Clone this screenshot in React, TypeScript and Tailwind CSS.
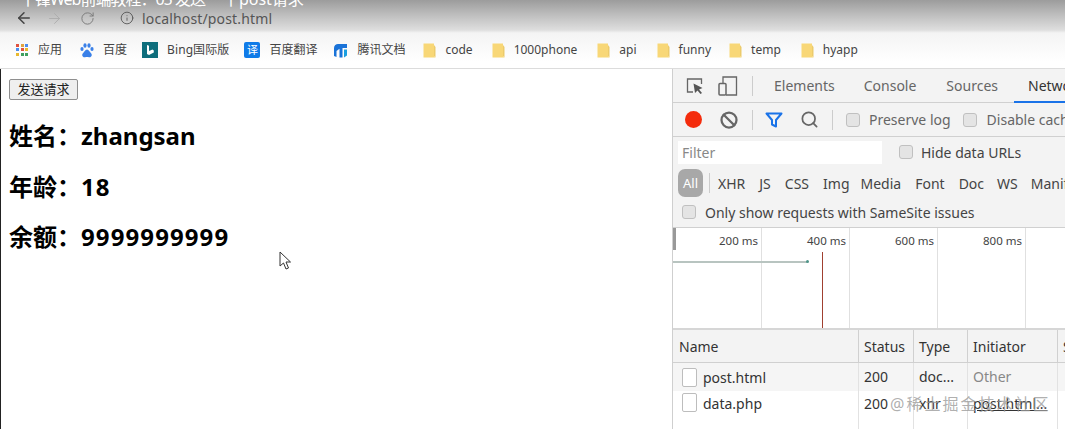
import React from 'react';
import { ArrowLeft, ArrowRight, RotateCw, Info, Search, Ban } from 'lucide-react';

const SANS = "font-['Noto_Sans','Noto_Sans_CJK_SC',sans-serif]";

function Folder() {
  return (
    <svg width="13" height="15" viewBox="0 0 13 15" className="shrink-0">
      <path d="M0.5 0.5H11V12.5L12.5 14.5H0.5Z" fill="#f8d777" />
      <path d="M11 2V12.5L12.5 14.5V4Z" fill="#eccb6c" />
    </svg>
  );
}

function AppsIcon() {
  const colors = ['#e0523f', '#e0a33f', '#4b8df0', '#4b8df0', '#e0523f', '#e8b92f', '#e8b92f', '#3f9f5f', '#3f9f5f'];
  return (
    <div className="grid grid-cols-3 gap-px w-[13px] h-[13px] shrink-0">
      {colors.map((c, i) => (
        <div key={i} className="w-[3px] h-[3px]" style={{ backgroundColor: c }} />
      ))}
    </div>
  );
}

function BaiduIcon() {
  return (
    <svg width="14" height="15" viewBox="0 0 14 15" fill="#3a80e8" className="shrink-0">
      <ellipse cx="2" cy="6" rx="1.6" ry="2" />
      <ellipse cx="5" cy="2.5" rx="1.6" ry="2.2" />
      <ellipse cx="9" cy="2.5" rx="1.6" ry="2.2" />
      <ellipse cx="12" cy="6" rx="1.6" ry="2" />
      <path d="M7 6.5C5 6.5 4.5 9 3 10.2C1.5 11.5 2.2 14.5 5 14.2C6.5 14 7.5 14 9 14.2C11.8 14.5 12.5 11.5 11 10.2C9.5 9 9 6.5 7 6.5Z" />
    </svg>
  );
}

function BingIcon() {
  return (
    <svg width="16" height="16" viewBox="0 0 16 16" className="shrink-0">
      <rect width="16" height="16" fill="#0e6e7c" />
      <path d="M5 3L7 3.7V9L10.5 7.5L11.8 8.4V10.5L7 13L5 12Z" fill="#fff" />
    </svg>
  );
}

function TencentIcon() {
  return (
    <svg width="15" height="15" viewBox="0 0 15 15" className="shrink-0">
      <path d="M1 5C1 2.5 3 1 5 1H14V5H9.5V14.5H6.5V5.8L3.5 8V14L1 13Z" fill="#1a73d8" />
      <path d="M11 6.5H14V12.5L11 14.5Z" fill="#1a9fe0" />
    </svg>
  );
}

function Bookmark({ icon, label, className }: { icon: React.ReactNode; label: string; className: string }) {
  return (
    <div className={`flex items-center gap-[9px] ${className}`}>
      {icon}
      <span className="text-[12px] text-[#444] whitespace-nowrap">{label}</span>
    </div>
  );
}

function Checkbox() {
  return <div className="w-[14px] h-[14px] rounded-[3px] bg-[#e4e4e4] border border-[#c0c0c0] shrink-0" />;
}

function DocIcon() {
  return <div className="w-[15px] h-[19px] bg-white border border-[#bdbdbd] rounded-[2px] shrink-0" />;
}

function BrowserBar() {
  return (
    <div className="h-[69px] shrink-0 border-b border-[#dcdcdc] bg-[linear-gradient(to_bottom,#9c9c9c_0px,#bcbcbc_14px,#dedede_30px,#f4f4f4_33px,#ffffff_62px)] overflow-hidden">
      <div className="h-[32px] relative">
        <div className="absolute left-[20px] -top-[13px] text-[16px] text-white whitespace-nowrap">
          <span className="tracking-[-1px]">丨锋Web前端教程：05 发送</span>
          <span className="ml-[18px]">丨post请求</span>
        </div>
        <div className="flex items-center h-[36px] pl-[15px] text-[#555]">
          <ArrowLeft size={18} strokeWidth={2} className="text-[#444]" />
          <ArrowRight size={17} strokeWidth={1.2} className="ml-[13px] text-[#aaa]" />
          <RotateCw size={15} strokeWidth={1.5} className="ml-[17px] text-[#777]" />
          <Info size={14} strokeWidth={1.5} className="ml-[25px] text-[#555]" />
          <span className="ml-[8px] text-[14px] tracking-[0.15px] text-[#555]">localhost/post.html</span>
        </div>
      </div>
      <div className="flex items-center h-[36px] pl-[16px]">
        <Bookmark className="mr-[18px]" icon={<AppsIcon />} label="应用" />
        <Bookmark className="mr-[15px]" icon={<BaiduIcon />} label="百度" />
        <Bookmark className="mr-[15px] tracking-[0.1px]" icon={<BingIcon />} label="Bing国际版" />
        <Bookmark className="mr-[16px]" icon={<div className="w-[16px] h-[16px] rounded-[2px] bg-[#0f7be8] text-white text-[11px] leading-[16px] text-center shrink-0">译</div>} label="百度翻译" />
        <Bookmark className="mr-[18px]" icon={<TencentIcon />} label="腾讯文档" />
        <Bookmark className="mr-[19px]" icon={<Folder />} label="code" />
        <Bookmark className="mr-[20px]" icon={<Folder />} label="1000phone" />
        <Bookmark className="mr-[20px]" icon={<Folder />} label="api" />
        <Bookmark className="mr-[18px]" icon={<Folder />} label="funny" />
        <Bookmark className="mr-[20px]" icon={<Folder />} label="temp" />
        <Bookmark className="" icon={<Folder />} label="hyapp" />
      </div>
    </div>
  );
}

function PageContent() {
  return (
    <div className="relative w-[672px] shrink-0 bg-white border-l border-[#222] pl-[8px] pt-[10px] text-black">
      <button className="block h-[21px] w-[69px] bg-[#efefef] border border-[#8f8f8f] rounded-[2px] text-[13px] leading-none text-[#222]">
        发送请求
      </button>
      <div className="mt-[21px] flex flex-col gap-[20.5px] text-[24px] font-bold leading-[30px]">
        <div>姓名：zhangsan</div>
        <div>年龄：<span className="tracking-[1.1px]">18</span></div>
        <div>余额：<span className="tracking-[1.1px]">9999999999</span></div>
      </div>
      {/* cursor */}
      <svg width="13" height="20" viewBox="0 0 13 20" className="absolute left-[278px] top-[182px]">
        <path d="M1 1V15L4.5 12L7 18L9.5 17L7 11H11.5Z" fill="#fff" stroke="#333" strokeWidth="1" />
      </svg>
    </div>
  );
}

function DevTools() {
  return (
    <div className="relative flex-1 min-w-0 overflow-hidden bg-white border-l border-[#cfcfcf] text-[#444]">
      <div className="flex items-center h-[34px] bg-[#f3f3f3] border-b border-[#d0d0d0]">
        <svg width="18" height="18" viewBox="0 0 18 18" className="ml-[13px] shrink-0" fill="none">
          <path d="M7 15H1.5V2H15.5V7" stroke="#666" strokeWidth="1.3" />
          <path d="M7.5 6.5L16.5 11L13 12.5L16 16L14.5 17L11.5 13.5L9 16Z" fill="#555" />
        </svg>
        <svg width="20" height="20" viewBox="0 0 20 20" className="ml-[14px] shrink-0" fill="none">
          <path d="M5 7V1H18.5V19H8" stroke="#666" strokeWidth="1.3" />
          <rect x="1" y="7.5" width="7" height="11.5" rx="1" stroke="#666" strokeWidth="1.5" />
        </svg>
        <div className="w-px h-[20px] bg-[#ccc] ml-[14px] shrink-0" />
        <span className="ml-[21px] text-[14px] text-[#666] shrink-0">Elements</span>
        <span className="ml-[29px] text-[14px] text-[#666] shrink-0">Console</span>
        <span className="ml-[30px] text-[14px] text-[#666] shrink-0">Sources</span>
        <span className="relative ml-[30px] h-full leading-[33px] text-[14px] text-[#333] pr-[30px] whitespace-nowrap shrink-0">
          Network
          <span className="absolute left-[-14px] right-0 bottom-[-1px] h-[2px] bg-[#1a73e8]" />
        </span>
      </div>
      <div className="flex items-center h-[34px] bg-[#f3f3f3] border-b border-[#d0d0d0] whitespace-nowrap">
        <div className="ml-[12px] w-[17px] h-[17px] rounded-full bg-[#f42c0c] shrink-0" />
        <Ban size={18} strokeWidth={3} className="ml-[18px] text-[#666] shrink-0" />
        <div className="w-px h-[20px] bg-[#ccc] ml-[14px] shrink-0" />
        <svg width="18" height="16" viewBox="0 0 18 16" className="ml-[12px] shrink-0" fill="none">
          <path d="M1.5 1.5H16.5L11 8V14.5L7 12.5V8Z" stroke="#1a73e8" strokeWidth="2" strokeLinejoin="round" />
        </svg>
        <Search size={19} strokeWidth={2.2} className="ml-[17px] text-[#666] shrink-0" />
        <div className="w-px h-[20px] bg-[#ccc] ml-[13px] shrink-0" />
        <div className="ml-[13px] shrink-0"><Checkbox /></div>
        <span className="ml-[9px] text-[14px] text-[#666] shrink-0">Preserve log</span>
        <div className="ml-[12px] shrink-0"><Checkbox /></div>
        <span className="ml-[10px] text-[14px] text-[#666] shrink-0">Disable cache</span>
      </div>
      <div className="flex items-center h-[31px] bg-[#f3f3f3]">
        <div className="ml-[5px] w-[204px] h-[23px] bg-white pl-[4px] text-[14px] leading-[23px] text-[#888] shrink-0">Filter</div>
        <div className="ml-[17px] -mt-[2px] shrink-0"><Checkbox /></div>
        <span className="ml-[8px] text-[14px] text-[#444] whitespace-nowrap">Hide data URLs</span>
      </div>
      <div className="flex items-center h-[30px] bg-[#f3f3f3] text-[14px] text-[#444] whitespace-nowrap">
        <div className="ml-[5px] w-[25px] h-[28px] shrink-0 rounded-[7px] bg-[#a8a8a8] text-white text-[13px] text-center leading-[28px]">All</div>
        <div className="w-px h-[20px] bg-[#ccc] ml-[6px] shrink-0" />
        <span className="ml-[8px] shrink-0">XHR</span>
        <span className="ml-[14px] shrink-0">JS</span>
        <span className="ml-[14px] shrink-0">CSS</span>
        <span className="ml-[14px] shrink-0">Img</span>
        <span className="ml-[11px] shrink-0">Media</span>
        <span className="ml-[14px] shrink-0">Font</span>
        <span className="ml-[14px] shrink-0">Doc</span>
        <span className="ml-[13px] shrink-0">WS</span>
        <span className="ml-[13px] shrink-0">Manifest</span>
      </div>
      <div className="flex items-center h-[30px] pb-px bg-[#f3f3f3] border-b border-[#d0d0d0] text-[14px] text-[#444] whitespace-nowrap">
        <div className="ml-[9px]"><Checkbox /></div>
        <span className="ml-[9px]">Only show requests with SameSite issues</span>
      </div>
      {/* overview timeline */}
      <div className="relative flex h-[102px] pl-px border-b-2 border-[#d6d6d6] text-[11.5px] text-[#444]">
        {['200 ms', '400 ms', '600 ms', '800 ms'].map((t) => (
          <div key={t} className="w-[88px] shrink-0 border-r border-[#e0e0e0] text-right pr-[3px] pt-[4px]">{t}</div>
        ))}
        <div className="absolute left-0 top-0 w-[3px] h-[22px] bg-[#999]" />
        <div className="absolute left-0 top-[33px] w-[134px] h-[2px] bg-[#b8c4c0]" />
        <div className="absolute left-[133px] top-[32px] w-[3px] h-[3px] rounded-full bg-[#4d9488]" />
        <div className="absolute left-[149px] top-[24px] w-px h-[76px] bg-[#a04030]" />
      </div>
      {/* request table */}
      <div className="grid grid-cols-[186px_55px_54px_90px_30px] text-[14px] text-[#333]">
        <div className="h-[33px] leading-[33px] px-[6px] bg-[#f3f3f3] border-b border-r border-[#d0d0d0]">Name</div>
        <div className="h-[33px] leading-[33px] px-[5px] bg-[#f3f3f3] border-b border-r border-[#d0d0d0]">Status</div>
        <div className="h-[33px] leading-[33px] px-[5px] bg-[#f3f3f3] border-b border-r border-[#d0d0d0]">Type</div>
        <div className="h-[33px] leading-[33px] px-[5px] bg-[#f3f3f3] border-b border-r border-[#d0d0d0]">Initiator</div>
        <div className="h-[33px] leading-[33px] px-[5px] bg-[#f3f3f3] border-b border-[#d0d0d0]">Size</div>

        <div className="h-[28px] flex items-center gap-[6px] pl-[9px] bg-[#f5f5f5] border-r border-[#e2e2e2]"><DocIcon />post.html</div>
        <div className="h-[28px] leading-[28px] px-[5px] bg-[#f5f5f5] border-r border-[#e2e2e2]">200</div>
        <div className="h-[28px] leading-[28px] px-[5px] bg-[#f5f5f5] border-r border-[#e2e2e2]">doc...</div>
        <div className="h-[28px] leading-[28px] px-[5px] bg-[#f5f5f5] border-r border-[#e2e2e2] text-[#888]">Other</div>
        <div className="h-[28px] bg-[#f5f5f5]" />

        <div className="h-[39px] flex items-start pt-[2px] gap-[6px] pl-[9px] border-r border-[#e2e2e2]"><DocIcon />data.php</div>
        <div className="h-[39px] pt-[2px] px-[5px] border-r border-[#e2e2e2]">200</div>
        <div className="h-[39px] pt-[2px] px-[5px] border-r border-[#e2e2e2]">xhr</div>
        <div className="h-[39px] pt-[2px] px-[5px] border-r border-[#e2e2e2] underline whitespace-nowrap overflow-hidden">post.html...</div>
        <div className="h-[39px]" />
      </div>
      {/* watermark */}
      <div className="absolute left-[217px] top-[323px] text-[16px] tracking-[2px] text-[#9a9a9a]/80 whitespace-nowrap">@稀土掘金技术社区</div>
    </div>
  );
}

export default function App() {
  return (
    <div className={`w-[1065px] h-[429px] overflow-hidden flex flex-col bg-white ${SANS}`}>
      <BrowserBar />
      <div className="flex flex-1 min-h-0">
        <PageContent />
        <DevTools />
      </div>
    </div>
  );
}
